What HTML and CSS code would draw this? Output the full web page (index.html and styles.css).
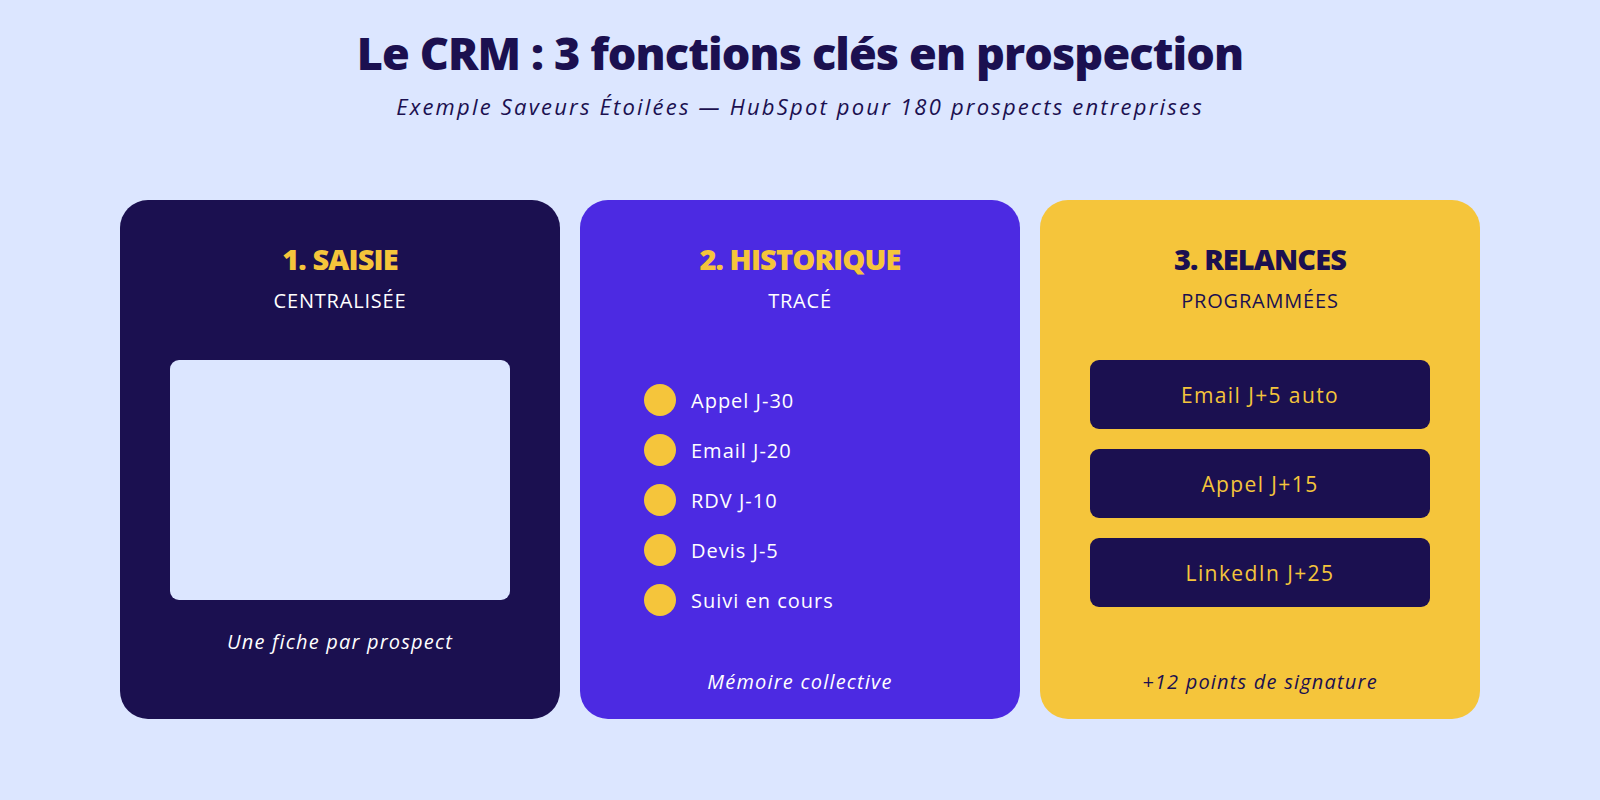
FILE: index.html
```html
<!DOCTYPE html>
<html lang="fr">
<head>
<meta charset="utf-8">
<title>Le CRM : 3 fonctions clés en prospection</title>
<link rel="stylesheet" href="styles.css">
</head>
<body>
<div class="page">
  <header class="head">
    <h1 class="title">Le CRM : 3 fonctions clés en prospection</h1>
    <p class="subtitle">Exemple Saveurs Étoilées — HubSpot pour 180 prospects entreprises</p>
  </header>
  <main class="cards">
    <section class="card card-navy">
      <h2 class="card-title yellow">1. SAISIE</h2>
      <p class="card-sub">CENTRALISÉE</p>
      <div class="fiche"></div>
      <p class="caption caption-inline">Une fiche par prospect</p>
    </section>
    <section class="card card-purple">
      <h2 class="card-title yellow">2. HISTORIQUE</h2>
      <p class="card-sub">TRACÉ</p>
      <ul class="timeline">
        <li class="step"><span class="dot"></span>Appel J-30</li>
        <li class="step"><span class="dot"></span>Email J-20</li>
        <li class="step"><span class="dot"></span>RDV J-10</li>
        <li class="step"><span class="dot"></span>Devis J-5</li>
        <li class="step"><span class="dot"></span>Suivi en cours</li>
      </ul>
      <p class="caption caption-bottom">Mémoire collective</p>
    </section>
    <section class="card card-yellow">
      <h2 class="card-title navy">3. RELANCES</h2>
      <p class="card-sub">PROGRAMMÉES</p>
      <div class="actions">
        <div class="action">Email J+5 auto</div>
        <div class="action">Appel J+15</div>
        <div class="action">LinkedIn J+25</div>
      </div>
      <p class="caption caption-bottom">+12 points de signature</p>
    </section>
  </main>
</div>
</body>
</html>
```
FILE: styles.css
```css
html, body {
  margin: 0;
  padding: 0;
  background: #dce6ff;
}
body {
  font-family: "Open Sans", "DejaVu Sans", sans-serif;
  color: #1b1050;
}
.page {
  width: 1600px;
  height: 800px;
}
.head {
  text-align: center;
  padding-top: 27px;
}
.title {
  margin: 0;
  font-size: 45px;
  line-height: 52px;
  font-weight: 800;
  letter-spacing: -0.9px;
  color: #1b1050;
}
.subtitle {
  margin: 13px 0 0;
  font-size: 22px;
  line-height: 28px;
  font-style: italic;
  letter-spacing: 2.2px;
  color: #1b1050;
}
.cards {
  display: flex;
  gap: 20px;
  padding: 0 120px;
  margin-top: 80px;
}
.card {
  width: 440px;
  height: 519px;
  box-sizing: border-box;
  border-radius: 28px;
  display: flex;
  flex-direction: column;
  align-items: center;
  padding: 42px 0 24px;
}
.card-navy { background: #1b1050; color: #ffffff; }
.card-purple { background: #4c2ae2; color: #ffffff; }
.card-yellow { background: #f5c53b; color: #1b1050; }
.card-title {
  margin: 0;
  font-size: 29px;
  line-height: 34px;
  font-weight: 800;
  letter-spacing: -0.9px;
}
.yellow { color: #f5c53b; }
.navy { color: #1b1050; }
.card-sub {
  margin: 12px 0 0;
  font-size: 20px;
  line-height: 26px;
  letter-spacing: 0.8px;
}
.fiche {
  margin-top: 46px;
  width: 340px;
  height: 240px;
  border-radius: 9px;
  background: #dce6ff;
}
.caption {
  margin: 0;
  font-size: 20px;
  line-height: 26px;
  font-style: italic;
  letter-spacing: 1.2px;
}
.caption-inline { margin-top: 29px; }
.caption-bottom { margin-top: auto; }
.timeline {
  list-style: none;
  margin: 70px 0 0;
  padding: 0 0 0 64px;
  align-self: stretch;
  display: flex;
  flex-direction: column;
  gap: 18px;
}
.step {
  display: flex;
  align-items: center;
  gap: 15px;
  height: 32px;
  font-size: 20px;
  letter-spacing: 1px;
}
.dot {
  width: 32px;
  height: 32px;
  border-radius: 50%;
  background: #f5c53b;
  flex: none;
}
.actions {
  margin-top: 46px;
  display: flex;
  flex-direction: column;
  gap: 20px;
}
.action {
  width: 340px;
  height: 69px;
  border-radius: 9px;
  background: #1b1050;
  color: #f5c53b;
  font-size: 21px;
  letter-spacing: 1.4px;
  display: flex;
  align-items: center;
  justify-content: center;
}
```
